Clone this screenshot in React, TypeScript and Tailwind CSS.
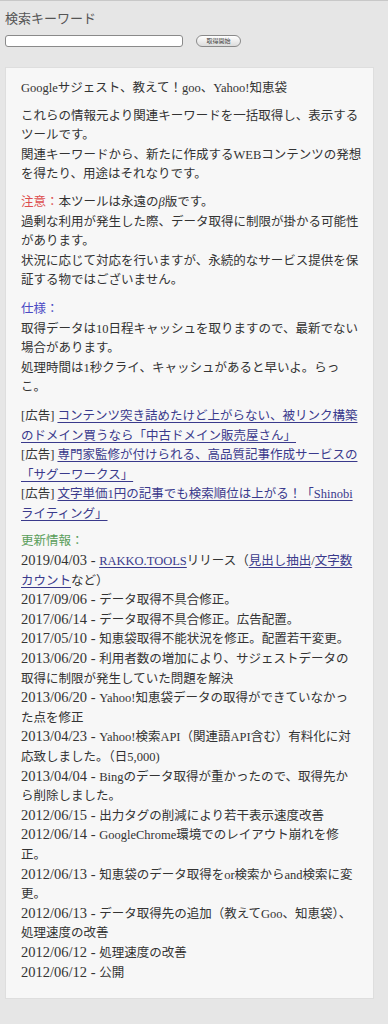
import React from "react";

const font = { fontFamily: '"Liberation Serif", "Noto Sans CJK JP", serif' };

const linkCls = "text-[#3a3a8c] underline underline-offset-2";

const Ad: React.FC<{ children: React.ReactNode }> = ({ children }) => (
  <div>
    [広告] <a className={linkCls}>{children}</a>
  </div>
);

// line breaks follow the original page
const updates: { date: string; body: React.ReactNode }[] = [
  {
    date: "2019/04/03",
    body: (
      <>
        <a className={linkCls}>RAKKO.TOOLS</a>リリース（<a className={linkCls}>見出し抽出</a>/
        <a className={linkCls}>
          文字数
          <br />
          カウント
        </a>
        など）
      </>
    ),
  },
  { date: "2017/09/06", body: "データ取得不具合修正。" },
  { date: "2017/06/14", body: "データ取得不具合修正。広告配置。" },
  { date: "2017/05/10", body: "知恵袋取得不能状況を修正。配置若干変更。" },
  {
    date: "2013/06/20",
    body: (
      <>
        利用者数の増加により、サジェストデータの
        <br />
        取得に制限が発生していた問題を解決
      </>
    ),
  },
  {
    date: "2013/06/20",
    body: (
      <>
        Yahoo!知恵袋データの取得ができていなかっ
        <br />
        た点を修正
      </>
    ),
  },
  {
    date: "2013/04/23",
    body: (
      <>
        Yahoo!検索API（関連語API含む）有料化に対
        <br />
        応致しました。（日5,000)
      </>
    ),
  },
  {
    date: "2013/04/04",
    body: (
      <>
        Bingのデータ取得が重かったので、取得先か
        <br />
        ら削除しました。
      </>
    ),
  },
  { date: "2012/06/15", body: "出力タグの削減により若干表示速度改善" },
  {
    date: "2012/06/14",
    body: (
      <>
        GoogleChrome環境でのレイアウト崩れを修
        <br />
        正。
      </>
    ),
  },
  {
    date: "2012/06/13",
    body: (
      <>
        知恵袋のデータ取得をor検索からand検索に変
        <br />
        更。
      </>
    ),
  },
  {
    date: "2012/06/13",
    body: (
      <>
        データ取得先の追加（教えてGoo、知恵袋）、
        <br />
        処理速度の改善
      </>
    ),
  },
  { date: "2012/06/12", body: "処理速度の改善" },
  { date: "2012/06/12", body: "公開" },
];

export default function App() {
  return (
    <div className="min-h-screen bg-[#e6e6e6] border-t border-[#c8c8c8] text-[#333]" style={font}>
      <div className="px-[5px] pt-[8px]">
        <div className="text-[13px] leading-[20px] text-[#555]">検索キーワード</div>
        <div className="mt-[6px] flex items-center">
          <input
            type="text"
            className="w-[178px] h-[12px] bg-white border border-[#8a8a8a] rounded-[3px] outline-none"
          />
          <button className="ml-[13px] w-[45px] h-[12px] rounded-full border border-[#8a8a8a] bg-gradient-to-b from-white to-[#dcdcdc] text-[6px] leading-[10px] text-[#444]">
            取得開始
          </button>
        </div>
      </div>

      <div className="ml-[5px] mt-[20px] w-[369px] bg-[#f7f7f7] border border-[#dedede] pl-[15px] pr-[4px] pt-[11px] pb-[15px] text-[12.5px] leading-[19.6px] whitespace-nowrap">
        <p className="mb-[8px]">Googleサジェスト、教えて！goo、Yahoo!知恵袋</p>

        <p className="mb-[8px]">
          これらの情報元より関連キーワードを一括取得し、表示する
          <br />
          ツールです。
          <br />
          関連キーワードから、新たに作成するWEBコンテンツの発想
          <br />
          を得たり、用途はそれなりです。
        </p>

        <p className="mb-[9px]">
          <span className="text-[#dd4f4f]">注意：</span>本ツールは永遠の<i>β</i>版です。
          <br />
          過剰な利用が発生した際、データ取得に制限が掛かる可能性
          <br />
          があります。
          <br />
          状況に応じて対応を行いますが、永続的なサービス提供を保
          <br />
          証する物ではございません。
        </p>

        <p className="mb-[9px]">
          <span className="text-[#4a4ac4]">仕様：</span>
          <br />
          取得データは10日程キャッシュを取りますので、最新でない
          <br />
          場合があります。
          <br />
          処理時間は1秒クライ、キャッシュがあると早いよ。らっ
          <br />
          こ。
        </p>

        <div className="mb-[8px]">
          <Ad>
            コンテンツ突き詰めたけど上がらない、被リンク構築
            <br />
            のドメイン買うなら「中古ドメイン販売屋さん」
          </Ad>
          <Ad>
            専門家監修が付けられる、高品質記事作成サービスの
            <br />
            「サグーワークス」
          </Ad>
          <Ad>
            文字単価1円の記事でも検索順位は上がる！「Shinobi
            <br />
            ライティング」
          </Ad>
        </div>

        <div>
          <div className="text-[#5a9e5a]">更新情報：</div>
          {updates.map((u, i) => (
            <div key={i}>
              <span className="text-[14.5px] leading-[1]">{u.date} - </span>
              {u.body}
            </div>
          ))}
        </div>
      </div>
    </div>
  );
}
